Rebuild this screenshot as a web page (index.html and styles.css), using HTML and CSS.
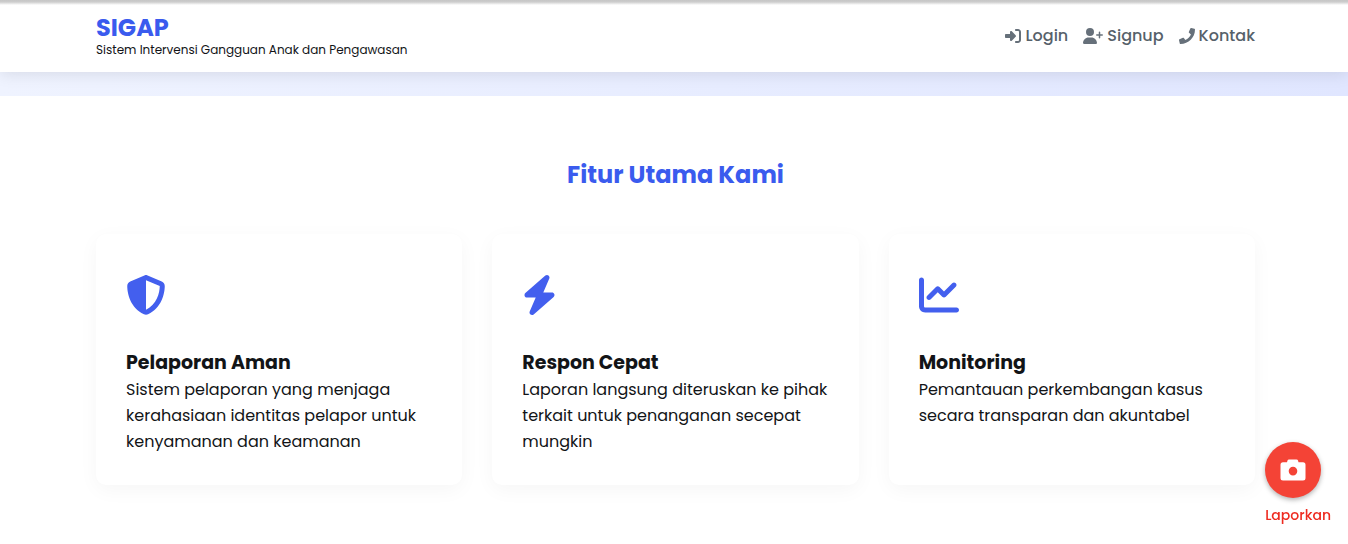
FILE: index.html
```html
<!DOCTYPE html>
<html lang="id">
<head>
<meta charset="utf-8">
<meta name="viewport" content="width=device-width, initial-scale=1">
<title>SIGAP</title>
<link rel="stylesheet" href="styles.css">
</head>
<body>
<header class="header">
  <div class="container header-inner">
    <div class="brand">
      <a class="brand-name" href="#">SIGAP</a>
      <span class="brand-tagline">Sistem Intervensi Gangguan Anak dan Pengawasan</span>
    </div>
    <nav class="nav">
      <a class="nav-link" href="#login"><svg class="nav-icon" viewBox="0 0 512 512" aria-hidden="true"><path d="M217.9 105.9L340.7 228.7c7.2 7.2 11.3 17.1 11.3 27.3s-4.1 20.1-11.3 27.3L217.9 406.1c-6.4 6.4-15 9.9-24 9.9c-18.7 0-33.9-15.2-33.9-33.9l0-62.1L32 320c-17.7 0-32-14.3-32-32l0-64c0-17.7 14.3-32 32-32l128 0 0-62.1c0-18.7 15.2-33.9 33.9-33.9c9 0 17.6 3.6 24 9.9zM352 416l64 0c17.7 0 32-14.3 32-32l0-256c0-17.7-14.3-32-32-32l-64 0c-17.7 0-32-14.3-32-32s14.3-32 32-32l64 0c53 0 96 43 96 96l0 256c0 53-43 96-96 96l-64 0c-17.7 0-32-14.3-32-32s14.3-32 32-32z"/></svg>Login</a>
      <a class="nav-link" href="#signup"><svg class="nav-icon nav-icon-wide" viewBox="0 0 640 512" aria-hidden="true"><path d="M96 128a128 128 0 1 1 256 0A128 128 0 1 1 96 128zM0 482.3C0 383.8 79.8 304 178.3 304h91.4C368.2 304 448 383.8 448 482.3c0 16.4-13.3 29.7-29.7 29.7H29.7C13.3 512 0 498.7 0 482.3zM504 312V248H440c-13.3 0-24-10.7-24-24s10.7-24 24-24h64V136c0-13.3 10.7-24 24-24s24 10.7 24 24v64h64c13.3 0 24 10.7 24 24s-10.7 24-24 24H552v64c0 13.3-10.7 24-24 24s-24-10.7-24-24z"/></svg>Signup</a>
      <a class="nav-link" href="#kontak"><svg class="nav-icon" viewBox="0 0 512 512" aria-hidden="true"><path d="M493.4 24.6l-104-24c-11.3-2.6-22.9 3.3-27.5 13.9l-48 112c-4.2 9.8-1.4 21.3 6.9 28l60.6 49.6c-36 76.7-98.9 140.5-177.2 177.2l-49.6-60.6c-6.8-8.3-18.2-11.1-28-6.9l-112 48C3.9 366.5-2 378.1.6 389.4l24 104C27.1 504.2 36.7 512 48 512c256.1 0 464-207.5 464-464 0-11.2-7.7-20.9-18.6-23.4z"/></svg>Kontak</a>
    </nav>
  </div>
</header>
<div class="hero"></div>
<main class="features">
  <div class="container">
    <h2 class="features-title">Fitur Utama Kami</h2>
    <div class="cards">
      <article class="card">
        <div class="card-icon"><svg viewBox="0 0 512 512" width="40" height="40" aria-hidden="true"><path d="M256 0c4.6 0 9.2 1 13.4 2.9L457.7 82.8c22 9.3 38.4 31 38.3 57.2c-.5 99.2-41.3 280.7-213.6 363.2c-16.7 8-36.1 8-52.8 0C57.3 420.7 16.5 239.2 16 140c-.1-26.2 16.3-47.9 38.3-57.2L242.7 2.9C246.8 1 251.4 0 256 0zm0 66.8V444.8C394 378 431.1 230.1 432 141.4L256 66.8z"/></svg></div>
        <h3 class="card-title">Pelaporan Aman</h3>
        <p class="card-text">Sistem pelaporan yang menjaga kerahasiaan identitas pelapor untuk kenyamanan dan keamanan</p>
      </article>
      <article class="card">
        <div class="card-icon"><svg viewBox="0 0 448 512" width="35" height="40" aria-hidden="true"><path d="M349.4 44.6c5.9-13.7 1.5-29.7-10.6-38.5s-28.6-8-39.9 1.8l-256 224c-10 8.8-13.6 22.9-8.9 35.3S50.7 288 64 288H175.5L98.6 467.4c-5.9 13.7-1.5 29.7 10.6 38.5s28.6 8 39.9-1.8l256-224c10-8.8 13.6-22.9 8.9-35.3s-16.6-20.7-30-20.7H272.5L349.4 44.6z"/></svg></div>
        <h3 class="card-title">Respon Cepat</h3>
        <p class="card-text">Laporan langsung diteruskan ke pihak terkait untuk penanganan secepat mungkin</p>
      </article>
      <article class="card">
        <div class="card-icon"><svg viewBox="0 0 512 512" width="40" height="40" aria-hidden="true"><path d="M64 64c0-17.7-14.3-32-32-32S0 46.3 0 64V400c0 44.2 35.8 80 80 80H480c17.7 0 32-14.3 32-32s-14.3-32-32-32H80c-8.8 0-16-7.2-16-16V64zm406.6 86.6c12.5-12.5 12.5-32.8 0-45.3s-32.8-12.5-45.3 0L320 210.7l-57.4-57.4c-12.5-12.5-32.8-12.5-45.3 0l-112 112c-12.5 12.5-12.5 32.8 0 45.3s32.8 12.5 45.3 0L240 221.3l57.4 57.4c12.5 12.5 32.8 12.5 45.3 0l128-128z"/></svg></div>
        <h3 class="card-title">Monitoring</h3>
        <p class="card-text">Pemantauan perkembangan kasus secara transparan dan akuntabel</p>
      </article>
    </div>
  </div>
</main>
<button class="report" type="button">
  <span class="report-circle"><svg viewBox="0 0 26 24" width="26" height="24" aria-hidden="true"><path fill-rule="evenodd" d="M9 1.500h7.500c.8 0 1.300.4 1.500 1.100l.5 1.700H23A2.500 2.500 0 0 1 25.500 6.800v13.200A2.500 2.500 0 0 1 23 22.500H3A2.500 2.500 0 0 1 .5 20V6.800A2.500 2.500 0 0 1 3 4.300h4l.5-1.700C7.700 1.900 8.200 1.500 9 1.500zM13 8.800a4.300 4.300 0 1 0 0 8.600A4.300 4.300 0 1 0 13 8.800z"/></svg></span>
  <span class="report-label">Laporkan</span>
</button>
</body>
</html>
```

FILE: styles.css
```css
* {
  box-sizing: border-box;
  margin: 0;
  padding: 0;
}

body {
  font-family: Poppins, Inter, sans-serif;
  font-size: 16px;
  line-height: 26px;
  color: #121417;
  background: #fff;
}

a {
  color: inherit;
  text-decoration: none;
}

.container {
  max-width: 1200px;
  margin: 0 auto;
  padding: 0 19px 0 22px;
}

.header {
  position: relative;
  z-index: 1;
  background: linear-gradient(#c6c6c6 0, #cdcdcd 2px, #fff 5px);
  box-shadow: 0 2px 15px rgba(0, 0, 0, 0.1);
}

.header-inner {
  display: flex;
  align-items: center;
  justify-content: space-between;
  min-height: 72px;
}

.brand {
  display: flex;
  flex-direction: column;
  padding-top: 1px;
}

.brand-name {
  font-size: 24px;
  font-weight: 700;
  line-height: 26px;
  color: #3a5bee;
}

.brand-tagline {
  font-size: 12px;
  line-height: 18px;
}

.nav {
  display: flex;
  gap: 15px;
}

.nav-link {
  display: flex;
  align-items: center;
  gap: 4px;
  font-size: 16px;
  font-weight: 500;
  color: #56616a;
}

.nav-icon {
  width: 16px;
  height: 16px;
  fill: #66707a;
}

.nav-icon-wide {
  width: 20px;
}

.hero {
  height: 24px;
  background: linear-gradient(90deg, #eff3ff, #e0e6ff);
}

.features {
  padding: 59px 0;
}

.features-title {
  margin-bottom: 39px;
  font-size: 24px;
  font-weight: 700;
  line-height: 40px;
  text-align: center;
  color: #3a5bee;
}

.cards {
  display: grid;
  grid-template-columns: repeat(3, 1fr);
  gap: 30px;
}

.card {
  padding: 30px;
  border-radius: 10px;
  background: #fff;
  box-shadow: 0 5px 20px rgba(0, 0, 0, 0.04);
}

.card-icon {
  display: flex;
  align-items: center;
  height: 62px;
  margin-bottom: 22px;
  fill: #435fee;
}

.card-title {
  font-size: 19px;
  font-weight: 700;
  line-height: 29px;
}

.report {
  position: fixed;
  right: 17px;
  bottom: 18px;
  z-index: 2;
  display: flex;
  flex-direction: column;
  gap: 6px;
  border: 0;
  background: none;
  font-family: inherit;
  cursor: pointer;
}

.report-circle {
  display: flex;
  align-items: center;
  justify-content: center;
  width: 56px;
  height: 56px;
  border-radius: 50%;
  background: #f44336;
  box-shadow: 0 2px 5px rgba(0, 0, 0, 0.3);
  fill: #fff;
}

.report-label {
  font-size: 14px;
  font-weight: 500;
  line-height: 22px;
  color: #ee2b20;
}

@media (max-width: 800px) {
  .cards {
    grid-template-columns: 1fr;
  }
}
```
